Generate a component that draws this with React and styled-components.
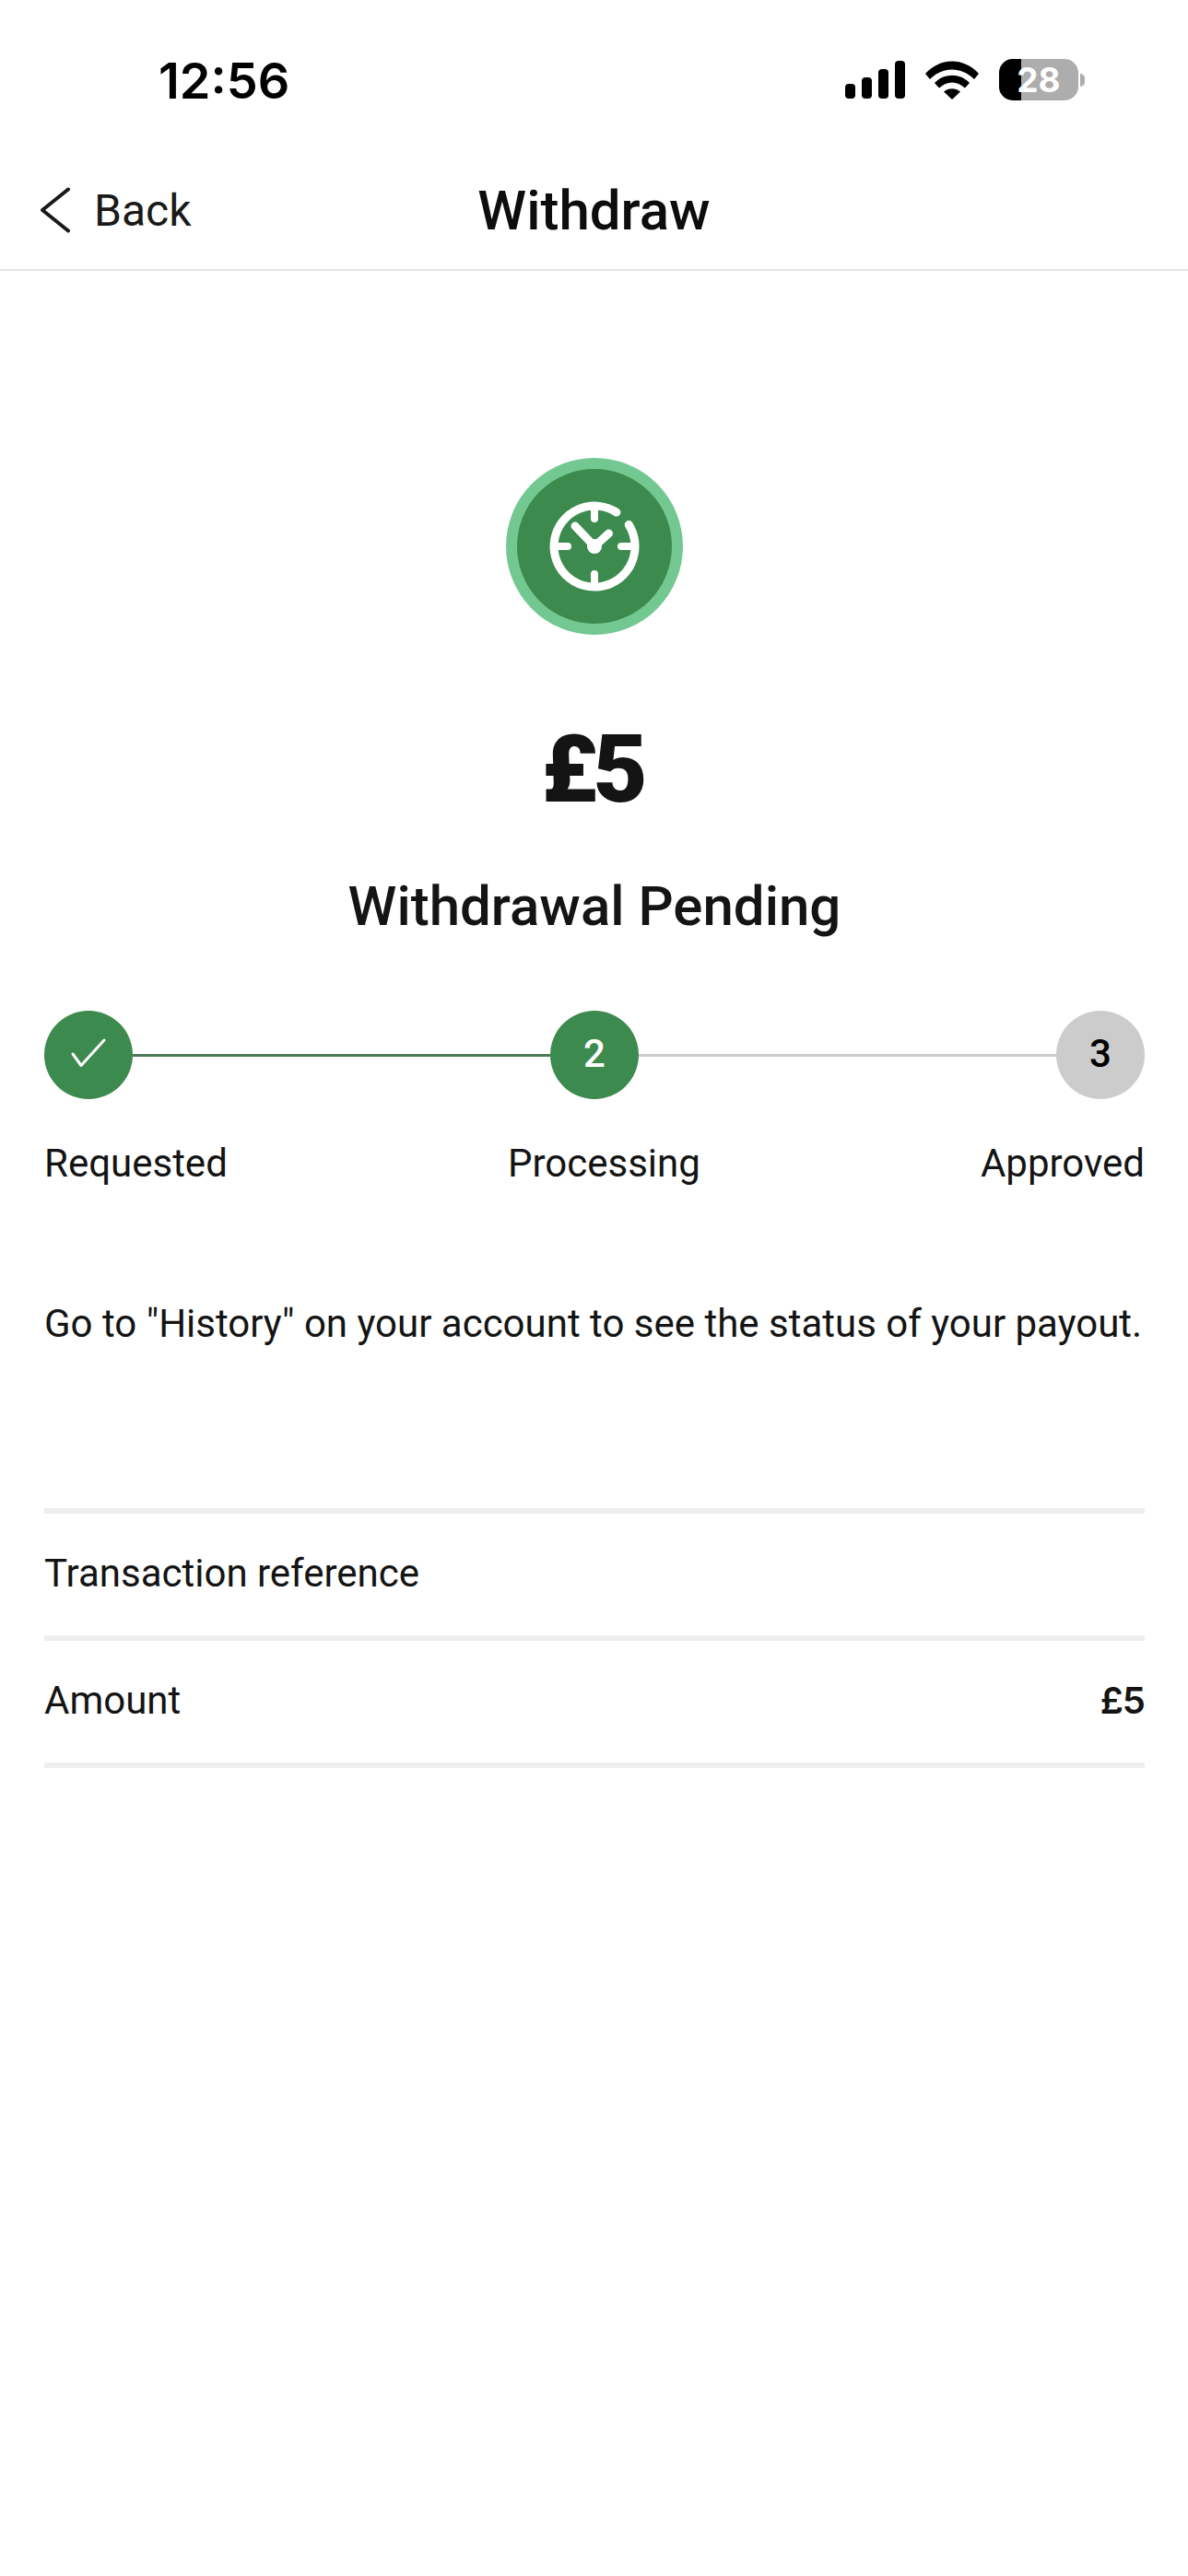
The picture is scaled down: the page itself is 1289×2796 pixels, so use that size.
import React from 'react';
import styled, {createGlobalStyle} from 'styled-components';

const GlobalStyle = createGlobalStyle`
    * { box-sizing: border-box; }
    body {
        margin: 0;
        background: #fff;
        color: #111;
        font-family: Roboto, "Liberation Sans", sans-serif;
    }
`;

const Page = styled.div`
    width: 1289px;
    min-height: 2796px;
    background: #fff;
`;

const StatusBar = styled.div`
    height: 166px;
    padding: 64px 112px 0 172px;
    display: flex;
    justify-content: space-between;
    align-items: flex-start;
`;

const Time = styled.div`
    font-family: Inter, sans-serif;
    font-weight: 600;
    font-size: 54px;
    line-height: 48px;
    letter-spacing: 0;
    color: #000;
`;

const StatusIcons = styled.div`
    display: flex;
    align-items: center;
    gap: 22px;
    height: 45px;
`;

const BatteryWrap = styled.div`
    display: flex;
    align-items: center;
    gap: 2px;
`;

const Battery = styled.div`
    position: relative;
    width: 86px;
    height: 45px;
    border-radius: 15px;
    overflow: hidden;
    background: #adadad;
    display: flex;
    align-items: center;
    justify-content: center;
    &::before {
        content: '';
        position: absolute;
        left: 0;
        top: 0;
        bottom: 0;
        width: 24px;
        background: #000;
    }
`;

const BatteryText = styled.span`
    position: relative;
    font-family: Inter, sans-serif;
    font-weight: 700;
    font-size: 37px;
    line-height: 1;
    color: #fff;
`;

const BatteryNub = styled.div`
    width: 5px;
    height: 14px;
    border-radius: 0 5px 5px 0;
    background: #adadad;
`;

const Header = styled.div`
    height: 128px;
    padding: 0 0 2px 44px;
    border-bottom: 2px solid #e2e2e2;
    display: grid;
    grid-template-columns: 1fr auto 1fr;
    align-items: center;
`;

const Back = styled.div`
    display: flex;
    align-items: center;
    gap: 26px;
    font-size: 48px;
    color: #1a1a1a;
`;

const Title = styled.div`
    font-size: 60px;
    font-weight: 500;
    color: #0d0d0d;
    margin-left: -44px;
`;

const Content = styled.div`
    padding: 203px 47px 0 48px;
    display: flex;
    flex-direction: column;
`;

const Hero = styled.div`
    display: flex;
    flex-direction: column;
    align-items: center;
`;

const StatusCircle = styled.div`
    width: 192px;
    height: 192px;
    border-radius: 50%;
    background: #3d8a4e;
    border: 12px solid #73c892;
    display: flex;
    align-items: center;
    justify-content: center;
`;

const AmountBig = styled.div`
    margin-top: 86px;
    padding-right: 5px;
    font-size: 102px;
    line-height: 120px;
    font-weight: 900;
    letter-spacing: -5px;
    color: #141414;
`;

const Heading = styled.h1`
    margin: 54px 0 0;
    font-size: 60px;
    line-height: 70px;
    font-weight: 500;
    color: #141414;
`;

const Stepper = styled.div`
    margin-top: 78px;
    display: flex;
    align-items: center;
`;

const StepDot = styled.div`
    flex: none;
    width: 96px;
    height: 96px;
    border-radius: 50%;
    background: ${props => props.$active ? '#3d8a4e' : '#cccccc'};
    color: ${props => props.$active ? '#fff' : '#000'};
    display: flex;
    align-items: center;
    justify-content: center;
    font-size: 42px;
    font-weight: 500;
    padding-bottom: 4px;
`;

const StepLine = styled.div`
    flex: 1;
    height: 3px;
    background: ${props => props.$active ? '#4a7a57' : '#cccccc'};
`;

const StepLabels = styled.div`
    margin-top: 45px;
    display: flex;
    justify-content: space-between;
    font-size: 42px;
    line-height: 50px;
    color: #141414;
`;

const Note = styled.p`
    margin: 124px 0 0;
    font-size: 42px;
    line-height: 50px;
    color: #141414;
    white-space: nowrap;
`;

const Rows = styled.div`
    margin-top: 175px;
    border-top: 6px solid #eeeeee;
`;

const Row = styled.div`
    height: 138px;
    padding-bottom: 4px;
    border-bottom: 6px solid #eeeeee;
    display: flex;
    justify-content: space-between;
    align-items: center;
    font-size: 42px;
    color: #141414;
`;

const RowValue = styled.span`
    font-family: Inter, sans-serif;
    font-size: 40px;
    font-weight: 600;
    letter-spacing: -1px;
`;

function SignalIcon(){
    return (
        <svg width="65" height="41" viewBox="0 0 65 41">
            <rect x="0" y="25" width="11" height="16" rx="4" fill="#000" />
            <rect x="18" y="18" width="11" height="23" rx="4" fill="#000" />
            <rect x="36" y="9" width="11" height="32" rx="4" fill="#000" />
            <rect x="54" y="0" width="11" height="41" rx="4" fill="#000" />
        </svg>
    );
}

function WifiIcon(){
    return (
        <svg width="58" height="42" viewBox="0 0 58 42">
            <path d="M0 14 C16 -4 42 -4 58 14 L53 20 C39 6 19 6 5 20 Z" fill="#000" />
            <path d="M10 24 C20 13 38 13 48 24 L43 29.5 C34 21.5 24 21.5 15 29.5 Z" fill="#000" />
            <path d="M20 33.5 C25 29 33 29 38 33.5 L29 42 Z" fill="#000" />
        </svg>
    );
}

function ChevronLeft(){
    return (
        <svg width="32" height="50" viewBox="0 0 32 50" fill="none">
            <path d="M30 2.5 L2 25 L30 47.5" stroke="#1a1a1a" strokeWidth="4" strokeLinecap="round" strokeLinejoin="round" />
        </svg>
    );
}

function ClockIcon(){
    return (
        <svg width="100" height="100" viewBox="0 0 100 100" fill="none" stroke="#fff" strokeLinecap="round">
            <path d="M87.2 26.5 A44 44 0 1 1 73.9 13.1" strokeWidth="9" />
            <path d="M50 9 V20 M50 80 V91 M9 50 H21 M79 50 H91" strokeWidth="8" />
            <path d="M29 28 L50 50 L65.5 36" strokeWidth="9" strokeLinejoin="round" />
            <circle cx="50" cy="50" r="8" fill="#fff" stroke="none" />
        </svg>
    );
}

function CheckIcon(){
    return (
        <svg width="48" height="48" viewBox="0 0 48 48" fill="none">
            <path d="M7 25 L16 37.5 L41 10" stroke="#fff" strokeWidth="3" strokeLinecap="round" strokeLinejoin="round" />
        </svg>
    );
}

export default function App(){
    return (
        <Page>
            <GlobalStyle />
            <StatusBar>
                <Time>12:56</Time>
                <StatusIcons>
                    <SignalIcon />
                    <WifiIcon />
                    <BatteryWrap>
                        <Battery>
                            <BatteryText>28</BatteryText>
                        </Battery>
                        <BatteryNub />
                    </BatteryWrap>
                </StatusIcons>
            </StatusBar>
            <Header>
                <Back>
                    <ChevronLeft />
                    Back
                </Back>
                <Title>Withdraw</Title>
            </Header>
            <Content>
                <Hero>
                    <StatusCircle>
                        <ClockIcon />
                    </StatusCircle>
                    <AmountBig>£5</AmountBig>
                    <Heading>Withdrawal Pending</Heading>
                </Hero>
                <Stepper>
                    <StepDot $active><CheckIcon /></StepDot>
                    <StepLine $active />
                    <StepDot $active>2</StepDot>
                    <StepLine />
                    <StepDot>3</StepDot>
                </Stepper>
                <StepLabels>
                    <span>Requested</span>
                    <span>Processing</span>
                    <span>Approved</span>
                </StepLabels>
                <Note>Go to "History" on your account to see the status of your payout.</Note>
                <Rows>
                    <Row>
                        <span>Transaction reference</span>
                    </Row>
                    <Row>
                        <span>Amount</span>
                        <RowValue>£5</RowValue>
                    </Row>
                </Rows>
            </Content>
        </Page>
    );
}
